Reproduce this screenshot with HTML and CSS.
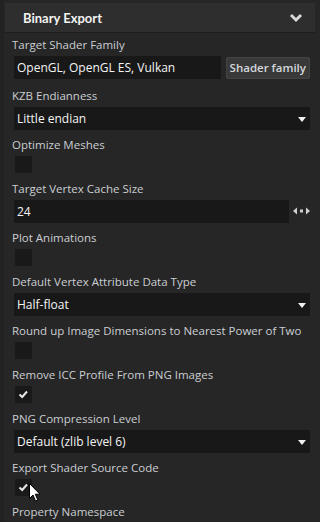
FILE: index.html
```html
<!DOCTYPE html>
<html lang="en">
<head>
    <meta charset="UTF-8">
    <title>Binary Export</title>
    <link rel="stylesheet" href="styles.css">
</head>
<body>
    <div class="panel">
        <div class="panel-header">
            <span class="panel-title">Binary Export</span>
            <svg class="chevron" width="14" height="10" viewBox="0 0 14 10">
                <path d="M2 2 L7 7 L12 2" fill="none" stroke="#d8d8d8" stroke-width="3"/>
            </svg>
        </div>
        <div class="panel-body">
            <div class="field first">
                <div class="label">Target Shader Family</div>
                <div class="row">
                    <div class="text-input grow">OpenGL, OpenGL ES, Vulkan</div>
                    <button class="btn">Shader family</button>
                </div>
            </div>
            <div class="field">
                <div class="label">KZB Endianness</div>
                <div class="select">Little endian<span class="caret"></span></div>
            </div>
            <div class="field">
                <div class="label">Optimize Meshes</div>
                <div class="checkbox"></div>
            </div>
            <div class="field">
                <div class="label">Target Vertex Cache Size</div>
                <div class="row">
                    <div class="text-input grow">24</div>
                    <svg class="drag" width="17" height="8" viewBox="0 0 17 8">
                        <path d="M0 4 L4 0.5 L4 7.5 Z M17 4 L13 0.5 L13 7.5 Z" fill="#d0d0d0"/>
                        <rect x="7" y="2.5" width="3" height="3" fill="#d0d0d0"/>
                    </svg>
                </div>
            </div>
            <div class="field">
                <div class="label">Plot Animations</div>
                <div class="checkbox"></div>
            </div>
            <div class="field">
                <div class="label">Default Vertex Attribute Data Type</div>
                <div class="select">Half-float<span class="caret"></span></div>
            </div>
            <div class="field">
                <div class="label">Round up Image Dimensions to Nearest Power of Two</div>
                <div class="checkbox"></div>
            </div>
            <div class="field">
                <div class="label">Remove ICC Profile From PNG Images</div>
                <div class="checkbox checked">
                    <svg width="17" height="17" viewBox="0 0 17 17">
                        <path d="M4.5 8.5 L7.2 11 L12 5.5" fill="none" stroke="#e6e6e6" stroke-width="2"/>
                    </svg>
                </div>
            </div>
            <div class="field">
                <div class="label">PNG Compression Level</div>
                <div class="select">Default (zlib level 6)<span class="caret"></span></div>
            </div>
            <div class="field">
                <div class="label">Export Shader Source Code</div>
                <div class="checkbox checked">
                    <svg width="17" height="17" viewBox="0 0 17 17">
                        <path d="M4.5 8.5 L7.2 11 L12 5.5" fill="none" stroke="#e6e6e6" stroke-width="2"/>
                    </svg>
                    <svg class="cursor" width="12" height="19" viewBox="0 0 12 19">
                        <path d="M0.5 0.5 L0.5 15.5 L4 12 L6.5 18 L8.8 17 L6.3 11.2 L11 11.2 Z" fill="#ffffff" stroke="#000000" stroke-width="1"/>
                    </svg>
                </div>
            </div>
            <div class="field">
                <div class="label">Property Namespace</div>
            </div>
        </div>
    </div>
</body>
</html>
```

FILE: styles.css
```css
body {
    margin: 0;
    background-color: #222222;
    font-family: "Open Sans", "Noto Sans", sans-serif;
    font-size: 11.5px;
    color: #cbced3;
    overflow: hidden;
}
.panel {
    width: 320px;
    height: 522px;
    padding-top: 3px;
    box-sizing: border-box;
    background-color: #262626;
    border-left: 4px solid #222222;
}
.panel-header {
    display: flex;
    align-items: center;
    justify-content: space-between;
    height: 29px;
    margin: 0 5px 0 1px;
    padding: 0 12px 0 18px;
    background-color: #2e2e2e;
    border-bottom: 1px solid #1e1e1e;
}
.panel-title {
    font-family: Lato, "Open Sans", sans-serif;
    font-weight: bold;
    font-size: 13px;
    color: #f2f2f2;
}
.chevron {
    display: block;
}
.panel-body {
    padding: 3px 10px 0 8px;
}
.field {
    margin-bottom: 6.6px;
}
.field.first {
    margin-bottom: 7.5px;
}
.label {
    height: 18px;
    line-height: 18px;
    margin-bottom: 2px;
    white-space: nowrap;
}
.row {
    display: flex;
    align-items: center;
    padding-left: 2px;
}
.grow {
    flex: 1;
}
.text-input,
.select {
    height: 23px;
    line-height: 23px;
    padding-left: 3px;
    background-color: #181818;
    color: #f4f4f4;
    font-size: 12px;
}
.select {
    position: relative;
    margin-left: 2px;
}
.caret {
    position: absolute;
    right: 4px;
    top: 10px;
    border-left: 4px solid transparent;
    border-right: 4px solid transparent;
    border-top: 5px solid #f0f0f0;
}
.btn {
    margin-left: 5px;
    height: 22px;
    padding: 0 3px;
    background-color: #393939;
    border: 1px solid #444444;
    border-radius: 2px;
    color: #d4d8dc;
    font-family: inherit;
    font-size: 11.5px;
    font-weight: 600;
}
.drag {
    margin: 0 0 0 4px;
}
.checkbox {
    position: relative;
    width: 17px;
    height: 17px;
    margin-left: 3px;
    background-color: #191919;
}
.checkbox svg {
    display: block;
}
.cursor {
    position: absolute;
    left: 14px;
    top: 4px;
}
```
